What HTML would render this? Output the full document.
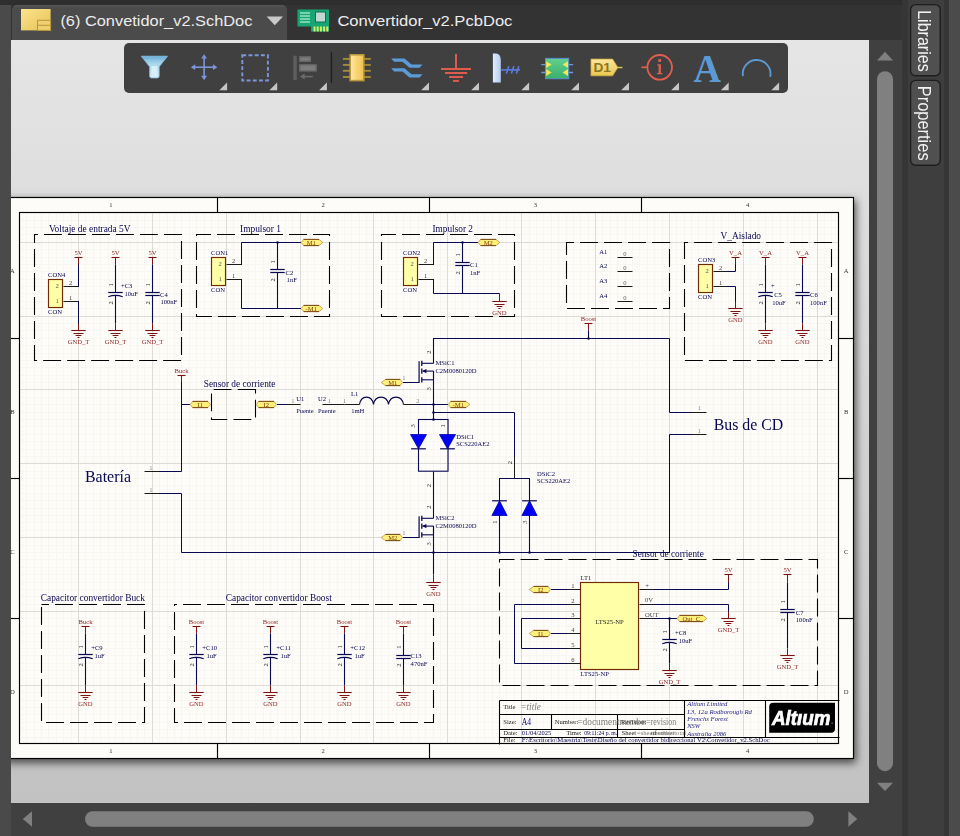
<!DOCTYPE html>
<html><head><meta charset="utf-8"><title>Altium</title>
<style>
html,body{margin:0;padding:0;}
body{width:960px;height:836px;overflow:hidden;background:#333333;position:relative;font-family:"Liberation Sans",sans-serif;}
.abs{position:absolute;}
#canvas{left:11px;top:39.5px;width:858px;height:763.5px;background:linear-gradient(#e5e5e5,#c2c2c2);overflow:hidden;}
#sheet{left:-6px;top:158px;width:849px;height:561px;background:#fefcf8;box-shadow:1px 3px 8px 1px rgba(0,0,0,.62);}
#tb{left:124px;top:43px;width:663.5px;height:49.5px;background:#404040;border-radius:5px;}
</style></head><body>
<!-- left strip -->
<div class="abs" style="left:0;top:0;width:11px;height:836px;background:#4a4a4a"></div>
<div class="abs" style="left:0;top:0;width:960px;height:4.5px;background:#2e2e2e"></div>
<!-- tabs -->
<div class="abs" style="left:11.5px;top:4.5px;width:275px;height:35px;background:linear-gradient(#585858,#4b4b4b 8%,#4b4b4b);border-radius:5px 5px 0 0;"></div>
<svg class="abs" style="left:0;top:0" width="560" height="40" viewBox="0 0 560 40">
 <defs><linearGradient id="yg" x1="0" y1="0" x2="1" y2="1"><stop offset="0" stop-color="#fbe38e"/><stop offset="1" stop-color="#e6c256"/></linearGradient></defs>
 <rect x="21" y="9" width="29.6" height="21.4" fill="url(#yg)"/>
 <rect x="37.5" y="20.3" width="13.1" height="10.1" fill="#efd070" stroke="#b8953a" stroke-width="1"/>
 <line x1="37.5" y1="25.3" x2="50.6" y2="25.3" stroke="#b8953a" stroke-width="1"/>
 <text x="60.4" y="26.4" font-family="Liberation Sans" font-size="15.2" fill="#ececec" textLength="192" lengthAdjust="spacingAndGlyphs">(6) Convetidor_v2.SchDoc</text>
 <polygon points="266.6,16.5 283,16.5 274.8,25.3" fill="#c9c9c9"/>
 <!-- pcb icon -->
 <rect x="297.5" y="9.5" width="31.5" height="17" fill="#17a673"/>
 <rect x="311" y="22" width="18" height="9.5" fill="#17a673"/>
 <g stroke="#b8f0d8" stroke-width="1.2"><line x1="300" y1="13" x2="310" y2="13"/><line x1="300" y1="16" x2="310" y2="16"/><line x1="300" y1="19" x2="310" y2="19"/><line x1="300" y1="22" x2="310" y2="22"/></g>
 <rect x="315.5" y="12" width="10" height="10" fill="#c4d6d4" stroke="#0c6e4c" stroke-width="1"/>
 <g fill="#d8ee60"><rect x="313.5" y="26.5" width="2" height="5"/><rect x="316.7" y="26.5" width="2" height="5"/><rect x="319.9" y="26.5" width="2" height="5"/><rect x="323.1" y="26.5" width="2" height="5"/><rect x="326.3" y="26.5" width="2" height="5"/></g>
 <text x="337.4" y="26.4" font-family="Liberation Sans" font-size="15.2" fill="#ececec" textLength="175" lengthAdjust="spacingAndGlyphs">Convertidor_v2.PcbDoc</text>
</svg>
<!-- canvas -->
<div id="canvas" class="abs"><div id="sheet" class="abs"></div></div>
<svg class="abs" style="left:0;top:0;will-change:transform" width="960" height="836" viewBox="0 0 960 836">
<defs>
 <clipPath id="cv"><rect x="11" y="39.5" width="858" height="763.5"/></clipPath>
 <clipPath id="sh"><rect x="20" y="213" width="819" height="530"/></clipPath>
 <clipPath id="cn"><rect x="570" y="714" width="76" height="15"/></clipPath>
</defs>
<g clip-path="url(#cv)">
 <g clip-path="url(#sh)">
  <path d="M26.5,213 V743 M34.5,213 V743 M41.5,213 V743 M48.5,213 V743 M56.5,213 V743 M63.5,213 V743 M71.5,213 V743 M85.5,213 V743 M93.5,213 V743 M100.5,213 V743 M108.5,213 V743 M115.5,213 V743 M122.5,213 V743 M130.5,213 V743 M137.5,213 V743 M144.5,213 V743 M159.5,213 V743 M167.5,213 V743 M174.5,213 V743 M181.5,213 V743 M189.5,213 V743 M196.5,213 V743 M204.5,213 V743 M211.5,213 V743 M218.5,213 V743 M233.5,213 V743 M241.5,213 V743 M248.5,213 V743 M255.5,213 V743 M263.5,213 V743 M270.5,213 V743 M277.5,213 V743 M285.5,213 V743 M292.5,213 V743 M307.5,213 V743 M314.5,213 V743 M322.5,213 V743 M329.5,213 V743 M337.5,213 V743 M344.5,213 V743 M351.5,213 V743 M359.5,213 V743 M366.5,213 V743 M381.5,213 V743 M388.5,213 V743 M396.5,213 V743 M403.5,213 V743 M410.5,213 V743 M418.5,213 V743 M425.5,213 V743 M433.5,213 V743 M440.5,213 V743 M455.5,213 V743 M462.5,213 V743 M469.5,213 V743 M477.5,213 V743 M484.5,213 V743 M492.5,213 V743 M499.5,213 V743 M506.5,213 V743 M514.5,213 V743 M529.5,213 V743 M536.5,213 V743 M543.5,213 V743 M551.5,213 V743 M558.5,213 V743 M566.5,213 V743 M573.5,213 V743 M580.5,213 V743 M588.5,213 V743 M602.5,213 V743 M610.5,213 V743 M617.5,213 V743 M625.5,213 V743 M632.5,213 V743 M639.5,213 V743 M647.5,213 V743 M654.5,213 V743 M662.5,213 V743 M676.5,213 V743 M684.5,213 V743 M691.5,213 V743 M698.5,213 V743 M706.5,213 V743 M713.5,213 V743 M721.5,213 V743 M728.5,213 V743 M735.5,213 V743 M750.5,213 V743 M758.5,213 V743 M765.5,213 V743 M772.5,213 V743 M780.5,213 V743 M787.5,213 V743 M794.5,213 V743 M802.5,213 V743 M809.5,213 V743 M824.5,213 V743 M831.5,213 V743 M20,737.5 H839 M20,729.5 H839 M20,722.5 H839 M20,714.5 H839 M20,707.5 H839 M20,700.5 H839 M20,692.5 H839 M20,678.5 H839 M20,670.5 H839 M20,663.5 H839 M20,655.5 H839 M20,648.5 H839 M20,641.5 H839 M20,633.5 H839 M20,626.5 H839 M20,618.5 H839 M20,604.5 H839 M20,596.5 H839 M20,589.5 H839 M20,582.5 H839 M20,574.5 H839 M20,567.5 H839 M20,559.5 H839 M20,552.5 H839 M20,545.5 H839 M20,530.5 H839 M20,522.5 H839 M20,515.5 H839 M20,508.5 H839 M20,500.5 H839 M20,493.5 H839 M20,485.5 H839 M20,478.5 H839 M20,471.5 H839 M20,456.5 H839 M20,449.5 H839 M20,441.5 H839 M20,434.5 H839 M20,426.5 H839 M20,419.5 H839 M20,412.5 H839 M20,404.5 H839 M20,397.5 H839 M20,382.5 H839 M20,375.5 H839 M20,367.5 H839 M20,360.5 H839 M20,353.5 H839 M20,345.5 H839 M20,338.5 H839 M20,330.5 H839 M20,323.5 H839 M20,308.5 H839 M20,301.5 H839 M20,293.5 H839 M20,286.5 H839 M20,279.5 H839 M20,271.5 H839 M20,264.5 H839 M20,257.5 H839 M20,249.5 H839 M20,234.5 H839 M20,227.5 H839 M20,220.5 H839 " stroke="#f8f6f1" stroke-width="1" fill="none"/><path d="M78.5,213 V743 M152.5,213 V743 M226.5,213 V743 M300.5,213 V743 M373.5,213 V743 M447.5,213 V743 M521.5,213 V743 M595.5,213 V743 M669.5,213 V743 M743.5,213 V743 M817.5,213 V743 M20,685.5 H839 M20,611.5 H839 M20,537.5 H839 M20,463.5 H839 M20,389.5 H839 M20,316.5 H839 M20,242.5 H839 " stroke="#dddbd5" stroke-width="1" fill="none"/>
 </g>
<rect x="5.5" y="197.5" width="848.0" height="561.0" fill="none" stroke="#000" stroke-width="1.15"/>
<rect x="19.5" y="212.5" width="819.0" height="531.0" fill="none" stroke="#000" stroke-width="1.15"/>
<line x1="217.5" y1="197.5" x2="217.5" y2="212.5" stroke="#000" stroke-width="1.15" />
<line x1="217.5" y1="743.5" x2="217.5" y2="758.5" stroke="#000" stroke-width="1.15" />
<line x1="429.5" y1="197.5" x2="429.5" y2="212.5" stroke="#000" stroke-width="1.15" />
<line x1="429.5" y1="743.5" x2="429.5" y2="758.5" stroke="#000" stroke-width="1.15" />
<line x1="641.5" y1="197.5" x2="641.5" y2="212.5" stroke="#000" stroke-width="1.15" />
<line x1="641.5" y1="743.5" x2="641.5" y2="758.5" stroke="#000" stroke-width="1.15" />
<line x1="5.5" y1="338.5" x2="19.5" y2="338.5" stroke="#000" stroke-width="1.15" />
<line x1="838.5" y1="338.5" x2="853.5" y2="338.5" stroke="#000" stroke-width="1.15" />
<line x1="5.5" y1="478.5" x2="19.5" y2="478.5" stroke="#000" stroke-width="1.15" />
<line x1="838.5" y1="478.5" x2="853.5" y2="478.5" stroke="#000" stroke-width="1.15" />
<line x1="5.5" y1="618.5" x2="19.5" y2="618.5" stroke="#000" stroke-width="1.15" />
<line x1="838.5" y1="618.5" x2="853.5" y2="618.5" stroke="#000" stroke-width="1.15" />
<text x="111" y="206.78" font-family="Liberation Serif" font-size="6.6" fill="#333" text-anchor="middle" >1</text>
<text x="111" y="753.38" font-family="Liberation Serif" font-size="6.6" fill="#333" text-anchor="middle" >1</text>
<text x="323.2" y="206.78" font-family="Liberation Serif" font-size="6.6" fill="#333" text-anchor="middle" >2</text>
<text x="323.2" y="753.38" font-family="Liberation Serif" font-size="6.6" fill="#333" text-anchor="middle" >2</text>
<text x="535.4" y="206.78" font-family="Liberation Serif" font-size="6.6" fill="#333" text-anchor="middle" >3</text>
<text x="535.4" y="753.38" font-family="Liberation Serif" font-size="6.6" fill="#333" text-anchor="middle" >3</text>
<text x="747.6" y="206.78" font-family="Liberation Serif" font-size="6.6" fill="#333" text-anchor="middle" >4</text>
<text x="747.6" y="753.38" font-family="Liberation Serif" font-size="6.6" fill="#333" text-anchor="middle" >4</text>
<text x="12.4" y="273.18" font-family="Liberation Serif" font-size="6.6" fill="#333" text-anchor="middle" >A</text>
<text x="846.2" y="273.18" font-family="Liberation Serif" font-size="6.6" fill="#333" text-anchor="middle" >A</text>
<text x="12.4" y="414.18" font-family="Liberation Serif" font-size="6.6" fill="#333" text-anchor="middle" >B</text>
<text x="846.2" y="414.18" font-family="Liberation Serif" font-size="6.6" fill="#333" text-anchor="middle" >B</text>
<text x="12.4" y="554.48" font-family="Liberation Serif" font-size="6.6" fill="#333" text-anchor="middle" >C</text>
<text x="846.2" y="554.48" font-family="Liberation Serif" font-size="6.6" fill="#333" text-anchor="middle" >C</text>
<text x="12.4" y="694.48" font-family="Liberation Serif" font-size="6.6" fill="#333" text-anchor="middle" >D</text>
<text x="846.2" y="694.48" font-family="Liberation Serif" font-size="6.6" fill="#333" text-anchor="middle" >D</text>
<path d="M34.5,234.5 H181.5 V360.5 H34.5 Z" fill="none" stroke="#000" stroke-width="1.1" stroke-dasharray="18 6" stroke-dashoffset="14.6"/>
<text x="49" y="231.9" font-family="Liberation Serif" font-size="9.4" fill="#070752" text-anchor="start" textLength="81.6" lengthAdjust="spacingAndGlyphs" >Voltaje de entrada 5V</text>
<rect x="48.5" y="279.5" width="14.0" height="28.0" fill="#ffffa8" stroke="#6e2c00" stroke-width="1.15"/>
<text x="48.1" y="277.38" font-family="Liberation Serif" font-size="6.6" fill="#070752" text-anchor="start" >CON4</text>
<text x="48.1" y="314.48" font-family="Liberation Serif" font-size="6.6" fill="#070752" text-anchor="start" >CON</text>
<line x1="63.5" y1="286.5" x2="78.5" y2="286.5" stroke="#1a1a1a" stroke-width="1.0" />
<line x1="63.5" y1="301.5" x2="78.5" y2="301.5" stroke="#1a1a1a" stroke-width="1.0" />
<text x="57.2" y="288.08" font-family="Liberation Serif" font-size="6.6" fill="#555" text-anchor="middle" >2</text>
<text x="57.2" y="303.08" font-family="Liberation Serif" font-size="6.6" fill="#555" text-anchor="middle" >1</text>
<text x="70.7" y="284.68" font-family="Liberation Serif" font-size="6.6" fill="#444" text-anchor="middle" >2</text>
<text x="70.7" y="299.68" font-family="Liberation Serif" font-size="6.6" fill="#444" text-anchor="middle" >1</text>
<polyline points="78.5,286.5 78.5,264.5" fill="none" stroke="#070752" stroke-width="1.0" stroke-linejoin="miter" stroke-linecap="square"/>
<line x1="78.5" y1="264.5" x2="78.5" y2="257.5" stroke="#7c1414" stroke-width="1.0" />
<line x1="74.5" y1="257.5" x2="82.5" y2="257.5" stroke="#7c1414" stroke-width="1.1" />
<text x="78.5" y="255.3" font-family="Liberation Serif" font-size="6.6" fill="#8a2828" text-anchor="middle" >5V</text>
<polyline points="78.5,301.5 78.5,323.5" fill="none" stroke="#070752" stroke-width="1.0" stroke-linejoin="miter" stroke-linecap="square"/>
<line x1="78.5" y1="323.5" x2="78.5" y2="330.5" stroke="#7c1414" stroke-width="1.0" />
<line x1="71.3" y1="330.5" x2="85.7" y2="330.5" stroke="#7c1414" stroke-width="1.1" />
<line x1="73.5" y1="333.5" x2="83.5" y2="333.5" stroke="#7c1414" stroke-width="1.0" />
<line x1="75.6" y1="335.5" x2="81.4" y2="335.5" stroke="#7c1414" stroke-width="1.0" />
<line x1="77.5" y1="337.5" x2="79.5" y2="337.5" stroke="#7c1414" stroke-width="1.0" />
<text x="78.5" y="343.68" font-family="Liberation Serif" font-size="6.6" fill="#8a2828" text-anchor="middle" >GND_T</text>
<line x1="115.5" y1="264.5" x2="115.5" y2="257.5" stroke="#7c1414" stroke-width="1.0" />
<line x1="111.5" y1="257.5" x2="119.5" y2="257.5" stroke="#7c1414" stroke-width="1.1" />
<text x="115.5" y="255.3" font-family="Liberation Serif" font-size="6.6" fill="#8a2828" text-anchor="middle" >5V</text>
<line x1="115.5" y1="264.5" x2="115.5" y2="292.5" stroke="#070752" stroke-width="1.1" />
<line x1="115.5" y1="295.5" x2="115.5" y2="323.5" stroke="#070752" stroke-width="1.1" />
<line x1="108.3" y1="292.5" x2="122.7" y2="292.5" stroke="#070752" stroke-width="1.2" />
<path d="M108.3,296.7 Q115.5,294.1 122.7,296.7" fill="none" stroke="#070752" stroke-width="1.2"/>
<text transform="translate(111.1,284.9) rotate(-90)" font-family="Liberation Serif" font-size="6.5" fill="#2a2a2a" text-anchor="middle" dy="2.15">1</text>
<text transform="translate(111.1,302.9) rotate(-90)" font-family="Liberation Serif" font-size="6.5" fill="#2a2a2a" text-anchor="middle" dy="2.15">2</text>
<line x1="115.5" y1="323.5" x2="115.5" y2="330.5" stroke="#7c1414" stroke-width="1.0" />
<line x1="108.3" y1="330.5" x2="122.7" y2="330.5" stroke="#7c1414" stroke-width="1.1" />
<line x1="110.5" y1="333.5" x2="120.5" y2="333.5" stroke="#7c1414" stroke-width="1.0" />
<line x1="112.6" y1="335.5" x2="118.4" y2="335.5" stroke="#7c1414" stroke-width="1.0" />
<line x1="114.5" y1="337.5" x2="116.5" y2="337.5" stroke="#7c1414" stroke-width="1.0" />
<text x="115.5" y="343.68" font-family="Liberation Serif" font-size="6.6" fill="#8a2828" text-anchor="middle" >GND_T</text>
<line x1="152.5" y1="264.5" x2="152.5" y2="257.5" stroke="#7c1414" stroke-width="1.0" />
<line x1="148.5" y1="257.5" x2="156.5" y2="257.5" stroke="#7c1414" stroke-width="1.1" />
<text x="152.5" y="255.3" font-family="Liberation Serif" font-size="6.6" fill="#8a2828" text-anchor="middle" >5V</text>
<line x1="152.5" y1="264.5" x2="152.5" y2="292.5" stroke="#070752" stroke-width="1.1" />
<line x1="152.5" y1="295.5" x2="152.5" y2="323.5" stroke="#070752" stroke-width="1.1" />
<line x1="145.3" y1="292.5" x2="159.7" y2="292.5" stroke="#070752" stroke-width="1.2" />
<line x1="145.3" y1="295.5" x2="159.7" y2="295.5" stroke="#070752" stroke-width="1.2" />
<text transform="translate(148.1,284.9) rotate(-90)" font-family="Liberation Serif" font-size="6.5" fill="#2a2a2a" text-anchor="middle" dy="2.15">1</text>
<text transform="translate(148.1,302.9) rotate(-90)" font-family="Liberation Serif" font-size="6.5" fill="#2a2a2a" text-anchor="middle" dy="2.15">2</text>
<line x1="152.5" y1="323.5" x2="152.5" y2="330.5" stroke="#7c1414" stroke-width="1.0" />
<line x1="145.3" y1="330.5" x2="159.7" y2="330.5" stroke="#7c1414" stroke-width="1.1" />
<line x1="147.5" y1="333.5" x2="157.5" y2="333.5" stroke="#7c1414" stroke-width="1.0" />
<line x1="149.6" y1="335.5" x2="155.4" y2="335.5" stroke="#7c1414" stroke-width="1.0" />
<line x1="151.5" y1="337.5" x2="153.5" y2="337.5" stroke="#7c1414" stroke-width="1.0" />
<text x="152.5" y="343.68" font-family="Liberation Serif" font-size="6.6" fill="#8a2828" text-anchor="middle" >GND_T</text>
<text x="121" y="288.38" font-family="Liberation Serif" font-size="6.6" fill="#070752" text-anchor="start" >+C3</text>
<text x="124.4" y="295.78" font-family="Liberation Serif" font-size="6.6" fill="#070752" text-anchor="start" >10uF</text>
<text x="160" y="296.78" font-family="Liberation Serif" font-size="6.6" fill="#070752" text-anchor="start" >C4</text>
<text x="160.4" y="304.28" font-family="Liberation Serif" font-size="6.6" fill="#070752" text-anchor="start" >100nF</text>
<path d="M196.5,234.5 H329.5 V316.5 H196.5 Z" fill="none" stroke="#000" stroke-width="1.1" stroke-dasharray="18 6" stroke-dashoffset="3.5"/>
<text x="240" y="231.9" font-family="Liberation Serif" font-size="9.4" fill="#070752" text-anchor="start" textLength="41" lengthAdjust="spacingAndGlyphs" >Impulsor 1</text>
<rect x="211.5" y="257.5" width="14.0" height="28.0" fill="#ffffa8" stroke="#6e2c00" stroke-width="1.15"/>
<text x="211.1" y="255.38" font-family="Liberation Serif" font-size="6.6" fill="#070752" text-anchor="start" >CON1</text>
<text x="211.1" y="292.48" font-family="Liberation Serif" font-size="6.6" fill="#070752" text-anchor="start" >CON</text>
<line x1="226.5" y1="264.5" x2="241.5" y2="264.5" stroke="#1a1a1a" stroke-width="1.0" />
<line x1="226.5" y1="279.5" x2="241.5" y2="279.5" stroke="#1a1a1a" stroke-width="1.0" />
<text x="220.2" y="266.08" font-family="Liberation Serif" font-size="6.6" fill="#555" text-anchor="middle" >2</text>
<text x="220.2" y="281.08" font-family="Liberation Serif" font-size="6.6" fill="#555" text-anchor="middle" >1</text>
<text x="233.7" y="262.68" font-family="Liberation Serif" font-size="6.6" fill="#444" text-anchor="middle" >2</text>
<text x="233.7" y="277.68" font-family="Liberation Serif" font-size="6.6" fill="#444" text-anchor="middle" >1</text>
<polyline points="241.5,264.5 241.5,242.5 300.5,242.5" fill="none" stroke="#070752" stroke-width="1.0" stroke-linejoin="miter" stroke-linecap="square"/>
<polyline points="241.5,279.5 241.5,308.5 300.5,308.5" fill="none" stroke="#070752" stroke-width="1.0" stroke-linejoin="miter" stroke-linecap="square"/>
<line x1="277.5" y1="242.5" x2="277.5" y2="269.5" stroke="#070752" stroke-width="1.1" />
<line x1="277.5" y1="272.5" x2="277.5" y2="308.5" stroke="#070752" stroke-width="1.1" />
<line x1="270.3" y1="269.5" x2="284.7" y2="269.5" stroke="#070752" stroke-width="1.2" />
<line x1="270.3" y1="272.5" x2="284.7" y2="272.5" stroke="#070752" stroke-width="1.2" />
<text transform="translate(273.1,261.8) rotate(-90)" font-family="Liberation Serif" font-size="6.5" fill="#2a2a2a" text-anchor="middle" dy="2.15">1</text>
<text transform="translate(273.1,279.8) rotate(-90)" font-family="Liberation Serif" font-size="6.5" fill="#2a2a2a" text-anchor="middle" dy="2.15">2</text>
<circle cx="277.5" cy="242.5" r="1.25" fill="#070752"/>
<text x="285.6" y="274.58" font-family="Liberation Serif" font-size="6.6" fill="#070752" text-anchor="start" >C2</text>
<text x="286.6" y="281.58" font-family="Liberation Serif" font-size="6.6" fill="#070752" text-anchor="start" >1nF</text>
<polygon points="301.2,242.5 303.6,239.4 319.0,239.4 322.8,242.5 319.0,245.6 303.6,245.6" fill="#fff07a" stroke="#b08a3a" stroke-width="0.7" stroke-linejoin="round"/>
<path d="M303.6,239.4 H319.0 M303.6,245.6 H319.0" stroke="#7a4a14" stroke-width="1.0" fill="none"/>
<text x="311.3" y="244.78" font-family="Liberation Serif" font-size="6.6" fill="#7a3a10" text-anchor="middle" >M1</text>
<polygon points="301.2,308.5 303.6,305.4 319.0,305.4 322.8,308.5 319.0,311.6 303.6,311.6" fill="#fff07a" stroke="#b08a3a" stroke-width="0.7" stroke-linejoin="round"/>
<path d="M303.6,305.4 H319.0 M303.6,311.6 H319.0" stroke="#7a4a14" stroke-width="1.0" fill="none"/>
<text x="311.3" y="310.78" font-family="Liberation Serif" font-size="6.6" fill="#7a3a10" text-anchor="middle" >-M1</text>
<path d="M381.5,234.5 H514.5 V316.5 H381.5 Z" fill="none" stroke="#000" stroke-width="1.1" stroke-dasharray="18 6" stroke-dashoffset="3.5"/>
<text x="432.5" y="231.9" font-family="Liberation Serif" font-size="9.4" fill="#070752" text-anchor="start" textLength="40.5" lengthAdjust="spacingAndGlyphs" >Impulsor 2</text>
<rect x="403.5" y="257.5" width="14.0" height="28.0" fill="#ffffa8" stroke="#6e2c00" stroke-width="1.15"/>
<text x="403.1" y="255.38" font-family="Liberation Serif" font-size="6.6" fill="#070752" text-anchor="start" >CON2</text>
<text x="403.1" y="292.48" font-family="Liberation Serif" font-size="6.6" fill="#070752" text-anchor="start" >CON</text>
<line x1="418.5" y1="264.5" x2="433.5" y2="264.5" stroke="#1a1a1a" stroke-width="1.0" />
<line x1="418.5" y1="279.5" x2="433.5" y2="279.5" stroke="#1a1a1a" stroke-width="1.0" />
<text x="412.2" y="266.08" font-family="Liberation Serif" font-size="6.6" fill="#555" text-anchor="middle" >2</text>
<text x="412.2" y="281.08" font-family="Liberation Serif" font-size="6.6" fill="#555" text-anchor="middle" >1</text>
<text x="425.7" y="262.68" font-family="Liberation Serif" font-size="6.6" fill="#444" text-anchor="middle" >2</text>
<text x="425.7" y="277.68" font-family="Liberation Serif" font-size="6.6" fill="#444" text-anchor="middle" >1</text>
<polyline points="433.5,264.5 433.5,242.5 477.5,242.5" fill="none" stroke="#070752" stroke-width="1.0" stroke-linejoin="miter" stroke-linecap="square"/>
<polyline points="433.5,279.5 433.5,293.5 499.5,293.5 499.5,293.5" fill="none" stroke="#070752" stroke-width="1.0" stroke-linejoin="miter" stroke-linecap="square"/>
<line x1="462.5" y1="242.5" x2="462.5" y2="262.5" stroke="#070752" stroke-width="1.1" />
<line x1="462.5" y1="265.5" x2="462.5" y2="293.5" stroke="#070752" stroke-width="1.1" />
<line x1="455.3" y1="262.5" x2="469.7" y2="262.5" stroke="#070752" stroke-width="1.2" />
<line x1="455.3" y1="265.5" x2="469.7" y2="265.5" stroke="#070752" stroke-width="1.2" />
<text transform="translate(458.1,254.8) rotate(-90)" font-family="Liberation Serif" font-size="6.5" fill="#2a2a2a" text-anchor="middle" dy="2.15">1</text>
<text transform="translate(458.1,272.8) rotate(-90)" font-family="Liberation Serif" font-size="6.5" fill="#2a2a2a" text-anchor="middle" dy="2.15">2</text>
<circle cx="462.5" cy="242.5" r="1.25" fill="#070752"/>
<text x="470" y="267.18" font-family="Liberation Serif" font-size="6.6" fill="#070752" text-anchor="start" >C1</text>
<text x="470" y="274.68" font-family="Liberation Serif" font-size="6.6" fill="#070752" text-anchor="start" >1nF</text>
<polygon points="478.2,242.5 480.6,239.4 496.0,239.4 499.8,242.5 496.0,245.6 480.6,245.6" fill="#fff07a" stroke="#b08a3a" stroke-width="0.7" stroke-linejoin="round"/>
<path d="M480.6,239.4 H496.0 M480.6,245.6 H496.0" stroke="#7a4a14" stroke-width="1.0" fill="none"/>
<text x="488.3" y="244.78" font-family="Liberation Serif" font-size="6.6" fill="#7a3a10" text-anchor="middle" >M2</text>
<line x1="499.5" y1="293.5" x2="499.5" y2="301.5" stroke="#7c1414" stroke-width="1.0" />
<line x1="492.3" y1="301.5" x2="506.7" y2="301.5" stroke="#7c1414" stroke-width="1.1" />
<line x1="494.5" y1="304.5" x2="504.5" y2="304.5" stroke="#7c1414" stroke-width="1.0" />
<line x1="496.6" y1="306.5" x2="502.4" y2="306.5" stroke="#7c1414" stroke-width="1.0" />
<line x1="498.5" y1="308.5" x2="500.5" y2="308.5" stroke="#7c1414" stroke-width="1.0" />
<text x="499.5" y="314.68" font-family="Liberation Serif" font-size="6.6" fill="#8a2828" text-anchor="middle" >GND</text>
<path d="M566.5,242.5 H669.5 V308.5 H566.5 Z" fill="none" stroke="#000" stroke-width="1.1" stroke-dasharray="18 6" stroke-dashoffset="10.5"/>
<line x1="617.5" y1="257.5" x2="632.5" y2="257.5" stroke="#1a1a1a" stroke-width="1.0" />
<text x="599.2" y="254.08" font-family="Liberation Serif" font-size="6.6" fill="#070752" text-anchor="start" >A1</text>
<text x="625" y="255.68" font-family="Liberation Serif" font-size="6.6" fill="#666" text-anchor="middle" >0</text>
<line x1="617.5" y1="271.5" x2="632.5" y2="271.5" stroke="#1a1a1a" stroke-width="1.0" />
<text x="599.2" y="268.08" font-family="Liberation Serif" font-size="6.6" fill="#070752" text-anchor="start" >A2</text>
<text x="625" y="269.68" font-family="Liberation Serif" font-size="6.6" fill="#666" text-anchor="middle" >0</text>
<line x1="617.5" y1="286.5" x2="632.5" y2="286.5" stroke="#1a1a1a" stroke-width="1.0" />
<text x="599.2" y="283.08" font-family="Liberation Serif" font-size="6.6" fill="#070752" text-anchor="start" >A3</text>
<text x="625" y="284.68" font-family="Liberation Serif" font-size="6.6" fill="#666" text-anchor="middle" >0</text>
<line x1="617.5" y1="301.5" x2="632.5" y2="301.5" stroke="#1a1a1a" stroke-width="1.0" />
<text x="599.2" y="298.08" font-family="Liberation Serif" font-size="6.6" fill="#070752" text-anchor="start" >A4</text>
<text x="625" y="299.68" font-family="Liberation Serif" font-size="6.6" fill="#666" text-anchor="middle" >0</text>
<path d="M684.5,242.5 H831.5 V360.5 H684.5 Z" fill="none" stroke="#000" stroke-width="1.1" stroke-dasharray="18 6" stroke-dashoffset="14.4"/>
<text x="720.5" y="239.2" font-family="Liberation Serif" font-size="9.4" fill="#070752" text-anchor="start" textLength="40.5" lengthAdjust="spacingAndGlyphs" >V_Aislado</text>
<rect x="698.5" y="264.5" width="14.0" height="28.0" fill="#ffffa8" stroke="#6e2c00" stroke-width="1.15"/>
<text x="698.1" y="262.38" font-family="Liberation Serif" font-size="6.6" fill="#070752" text-anchor="start" >CON3</text>
<text x="698.1" y="299.48" font-family="Liberation Serif" font-size="6.6" fill="#070752" text-anchor="start" >CON</text>
<line x1="713.5" y1="271.5" x2="728.5" y2="271.5" stroke="#1a1a1a" stroke-width="1.0" />
<line x1="713.5" y1="286.5" x2="728.5" y2="286.5" stroke="#1a1a1a" stroke-width="1.0" />
<text x="707.2" y="273.08" font-family="Liberation Serif" font-size="6.6" fill="#555" text-anchor="middle" >2</text>
<text x="707.2" y="288.08" font-family="Liberation Serif" font-size="6.6" fill="#555" text-anchor="middle" >1</text>
<text x="720.7" y="269.68" font-family="Liberation Serif" font-size="6.6" fill="#444" text-anchor="middle" >2</text>
<text x="720.7" y="284.68" font-family="Liberation Serif" font-size="6.6" fill="#444" text-anchor="middle" >1</text>
<polyline points="728.5,271.5 735.5,271.5 735.5,264.5" fill="none" stroke="#070752" stroke-width="1.0" stroke-linejoin="miter" stroke-linecap="square"/>
<line x1="735.5" y1="264.5" x2="735.5" y2="257.5" stroke="#7c1414" stroke-width="1.0" />
<line x1="731.5" y1="257.5" x2="739.5" y2="257.5" stroke="#7c1414" stroke-width="1.1" />
<text x="735.5" y="255.3" font-family="Liberation Serif" font-size="6.6" fill="#8a2828" text-anchor="middle" >V_A</text>
<polyline points="728.5,286.5 735.5,286.5 735.5,301.5" fill="none" stroke="#070752" stroke-width="1.0" stroke-linejoin="miter" stroke-linecap="square"/>
<line x1="735.5" y1="301.5" x2="735.5" y2="308.5" stroke="#7c1414" stroke-width="1.0" />
<line x1="728.3" y1="308.5" x2="742.7" y2="308.5" stroke="#7c1414" stroke-width="1.1" />
<line x1="730.5" y1="311.5" x2="740.5" y2="311.5" stroke="#7c1414" stroke-width="1.0" />
<line x1="732.6" y1="313.5" x2="738.4" y2="313.5" stroke="#7c1414" stroke-width="1.0" />
<line x1="734.5" y1="315.5" x2="736.5" y2="315.5" stroke="#7c1414" stroke-width="1.0" />
<text x="735.5" y="321.68" font-family="Liberation Serif" font-size="6.6" fill="#8a2828" text-anchor="middle" >GND</text>
<line x1="765.5" y1="264.5" x2="765.5" y2="257.5" stroke="#7c1414" stroke-width="1.0" />
<line x1="761.5" y1="257.5" x2="769.5" y2="257.5" stroke="#7c1414" stroke-width="1.1" />
<text x="765.5" y="255.3" font-family="Liberation Serif" font-size="6.6" fill="#8a2828" text-anchor="middle" >V_A</text>
<line x1="765.5" y1="264.5" x2="765.5" y2="292.5" stroke="#070752" stroke-width="1.1" />
<line x1="765.5" y1="295.5" x2="765.5" y2="323.5" stroke="#070752" stroke-width="1.1" />
<line x1="758.3" y1="292.5" x2="772.7" y2="292.5" stroke="#070752" stroke-width="1.2" />
<path d="M758.3,296.7 Q765.5,294.1 772.7,296.7" fill="none" stroke="#070752" stroke-width="1.2"/>
<text transform="translate(761.1,284.8) rotate(-90)" font-family="Liberation Serif" font-size="6.5" fill="#2a2a2a" text-anchor="middle" dy="2.15">1</text>
<text transform="translate(761.1,302.8) rotate(-90)" font-family="Liberation Serif" font-size="6.5" fill="#2a2a2a" text-anchor="middle" dy="2.15">2</text>
<line x1="765.5" y1="323.5" x2="765.5" y2="330.5" stroke="#7c1414" stroke-width="1.0" />
<line x1="758.3" y1="330.5" x2="772.7" y2="330.5" stroke="#7c1414" stroke-width="1.1" />
<line x1="760.5" y1="333.5" x2="770.5" y2="333.5" stroke="#7c1414" stroke-width="1.0" />
<line x1="762.6" y1="335.5" x2="768.4" y2="335.5" stroke="#7c1414" stroke-width="1.0" />
<line x1="764.5" y1="337.5" x2="766.5" y2="337.5" stroke="#7c1414" stroke-width="1.0" />
<text x="765.5" y="343.68" font-family="Liberation Serif" font-size="6.6" fill="#8a2828" text-anchor="middle" >GND</text>
<line x1="802.5" y1="264.5" x2="802.5" y2="257.5" stroke="#7c1414" stroke-width="1.0" />
<line x1="798.5" y1="257.5" x2="806.5" y2="257.5" stroke="#7c1414" stroke-width="1.1" />
<text x="802.5" y="255.3" font-family="Liberation Serif" font-size="6.6" fill="#8a2828" text-anchor="middle" >V_A</text>
<line x1="802.5" y1="264.5" x2="802.5" y2="292.5" stroke="#070752" stroke-width="1.1" />
<line x1="802.5" y1="295.5" x2="802.5" y2="323.5" stroke="#070752" stroke-width="1.1" />
<line x1="795.3" y1="292.5" x2="809.7" y2="292.5" stroke="#070752" stroke-width="1.2" />
<line x1="795.3" y1="295.5" x2="809.7" y2="295.5" stroke="#070752" stroke-width="1.2" />
<text transform="translate(798.1,284.8) rotate(-90)" font-family="Liberation Serif" font-size="6.5" fill="#2a2a2a" text-anchor="middle" dy="2.15">1</text>
<text transform="translate(798.1,302.8) rotate(-90)" font-family="Liberation Serif" font-size="6.5" fill="#2a2a2a" text-anchor="middle" dy="2.15">2</text>
<line x1="802.5" y1="323.5" x2="802.5" y2="330.5" stroke="#7c1414" stroke-width="1.0" />
<line x1="795.3" y1="330.5" x2="809.7" y2="330.5" stroke="#7c1414" stroke-width="1.1" />
<line x1="797.5" y1="333.5" x2="807.5" y2="333.5" stroke="#7c1414" stroke-width="1.0" />
<line x1="799.6" y1="335.5" x2="805.4" y2="335.5" stroke="#7c1414" stroke-width="1.0" />
<line x1="801.5" y1="337.5" x2="803.5" y2="337.5" stroke="#7c1414" stroke-width="1.0" />
<text x="802.5" y="343.68" font-family="Liberation Serif" font-size="6.6" fill="#8a2828" text-anchor="middle" >GND</text>
<text x="771" y="288.38" font-family="Liberation Serif" font-size="6.6" fill="#070752" text-anchor="start" >+</text>
<text x="774.2" y="296.78" font-family="Liberation Serif" font-size="6.6" fill="#070752" text-anchor="start" >C5</text>
<text x="772.2" y="304.58" font-family="Liberation Serif" font-size="6.6" fill="#070752" text-anchor="start" >10uF</text>
<text x="810" y="296.78" font-family="Liberation Serif" font-size="6.6" fill="#070752" text-anchor="start" >C6</text>
<text x="810" y="304.58" font-family="Liberation Serif" font-size="6.6" fill="#070752" text-anchor="start" >100nF</text>
<line x1="181.5" y1="382.5" x2="181.5" y2="375.5" stroke="#7c1414" stroke-width="1.0" />
<line x1="177.5" y1="375.5" x2="185.5" y2="375.5" stroke="#7c1414" stroke-width="1.1" />
<text x="181.5" y="373.3" font-family="Liberation Serif" font-size="6.6" fill="#8a2828" text-anchor="middle" >Buck</text>
<polyline points="181.5,382.5 181.5,471.5 159.5,471.5" fill="none" stroke="#070752" stroke-width="1.0" stroke-linejoin="miter" stroke-linecap="square"/>
<line x1="144.5" y1="471.5" x2="159.5" y2="471.5" stroke="#1a1a1a" stroke-width="1.0" />
<text x="151" y="469.78" font-family="Liberation Serif" font-size="6.6" fill="#888" text-anchor="middle" >1</text>
<line x1="144.5" y1="493.5" x2="159.5" y2="493.5" stroke="#1a1a1a" stroke-width="1.0" />
<text x="151" y="491.78" font-family="Liberation Serif" font-size="6.6" fill="#888" text-anchor="middle" >1</text>
<polyline points="159.5,493.5 181.5,493.5 181.5,552.5 669.5,552.5" fill="none" stroke="#070752" stroke-width="1.0" stroke-linejoin="miter" stroke-linecap="square"/>
<text x="85" y="482" font-family="Liberation Serif" font-size="15.9" fill="#070752" text-anchor="start" textLength="46" lengthAdjust="spacingAndGlyphs" >Batería</text>
<polyline points="181.5,404.5 189.5,404.5" fill="none" stroke="#070752" stroke-width="1.0" stroke-linejoin="miter" stroke-linecap="square"/>
<polygon points="190.2,404.5 192.6,401.4 208.0,401.4 210.4,404.5 208.0,407.6 192.6,407.6" fill="#fff07a" stroke="#b08a3a" stroke-width="0.7" stroke-linejoin="round"/>
<path d="M192.6,401.4 H208.0 M192.6,407.6 H208.0" stroke="#7a4a14" stroke-width="1.0" fill="none"/>
<text x="200.3" y="406.78" font-family="Liberation Serif" font-size="6.6" fill="#7a3a10" text-anchor="middle" >I1</text>
<path d="M255.5,389.5 H211.5 V419.5 H255.5 Z" fill="none" stroke="#000" stroke-width="1.1" stroke-dasharray="17.8 6.2" stroke-dashoffset="0"/>
<text x="203.75" y="386.9" font-family="Liberation Serif" font-size="9.4" fill="#070752" text-anchor="start" textLength="71.75" lengthAdjust="spacingAndGlyphs" >Sensor de corriente</text>
<polygon points="256.2,404.5 258.6,401.4 274.0,401.4 276.4,404.5 274.0,407.6 258.6,407.6" fill="#fff07a" stroke="#b08a3a" stroke-width="0.7" stroke-linejoin="round"/>
<path d="M258.6,401.4 H274.0 M258.6,407.6 H274.0" stroke="#7a4a14" stroke-width="1.0" fill="none"/>
<text x="266.3" y="406.78" font-family="Liberation Serif" font-size="6.6" fill="#7a3a10" text-anchor="middle" >I2</text>
<polyline points="277.5,404.5 285.5,404.5" fill="none" stroke="#070752" stroke-width="1.0" stroke-linejoin="miter" stroke-linecap="square"/>
<line x1="285.5" y1="404.5" x2="300.5" y2="404.5" stroke="#1a1a1a" stroke-width="1.0" />
<text x="293" y="402.58" font-family="Liberation Serif" font-size="6.6" fill="#888" text-anchor="middle" >1</text>
<text x="296.2" y="400.68" font-family="Liberation Serif" font-size="6.6" fill="#070752" text-anchor="start" >U1</text>
<text x="296.2" y="412.58" font-family="Liberation Serif" font-size="6.6" fill="#070752" text-anchor="start" textLength="17.5" lengthAdjust="spacingAndGlyphs" >Puente</text>
<line x1="322.5" y1="404.5" x2="344.5" y2="404.5" stroke="#1a1a1a" stroke-width="1.0" />
<text x="329.4" y="402.58" font-family="Liberation Serif" font-size="6.6" fill="#888" text-anchor="middle" >1</text>
<text x="344.4" y="402.58" font-family="Liberation Serif" font-size="6.6" fill="#888" text-anchor="middle" >1</text>
<text x="318" y="400.68" font-family="Liberation Serif" font-size="6.6" fill="#070752" text-anchor="start" >U2</text>
<text x="318" y="412.58" font-family="Liberation Serif" font-size="6.6" fill="#070752" text-anchor="start" textLength="17.5" lengthAdjust="spacingAndGlyphs" >Puente</text>
<line x1="344.5" y1="404.5" x2="359.5" y2="404.5" stroke="#1a1a1a" stroke-width="1.0" />
<text x="350.9" y="395.58" font-family="Liberation Serif" font-size="6.6" fill="#070752" text-anchor="start" >L1</text>
<text x="351.2" y="412.58" font-family="Liberation Serif" font-size="6.6" fill="#070752" text-anchor="start" >1mH</text>
<path d="M359.5,404.5 C361.1,394.7 371.9,394.7 373.5,404.5 C375.1,394.7 386.9,394.7 388.5,404.5 C390.1,394.7 401.9,394.7 403.5,404.5" fill="none" stroke="#070752" stroke-width="1.15"/>
<line x1="403.5" y1="404.5" x2="418.5" y2="404.5" stroke="#1a1a1a" stroke-width="1.0" />
<text x="418" y="402.58" font-family="Liberation Serif" font-size="6.6" fill="#888" text-anchor="middle" >2</text>
<polyline points="418.5,404.5 447.5,404.5" fill="none" stroke="#070752" stroke-width="1.0" stroke-linejoin="miter" stroke-linecap="square"/>
<circle cx="433.5" cy="404.5" r="1.25" fill="#070752"/>
<circle cx="433.5" cy="412.5" r="1.25" fill="#070752"/>
<polygon points="448.2,404.5 450.6,401.4 466.0,401.4 469.8,404.5 466.0,407.6 450.6,407.6" fill="#fff07a" stroke="#b08a3a" stroke-width="0.7" stroke-linejoin="round"/>
<path d="M450.6,401.4 H466.0 M450.6,407.6 H466.0" stroke="#7a4a14" stroke-width="1.0" fill="none"/>
<text x="458.3" y="406.78" font-family="Liberation Serif" font-size="6.6" fill="#7a3a10" text-anchor="middle" >-M1</text>
<polyline points="433.5,338.5 669.5,338.5 669.5,412.5 691.5,412.5" fill="none" stroke="#070752" stroke-width="1.0" stroke-linejoin="miter" stroke-linecap="square"/>
<line x1="691.5" y1="412.5" x2="706.5" y2="412.5" stroke="#1a1a1a" stroke-width="1.0" />
<text x="699.5" y="410.18" font-family="Liberation Serif" font-size="6.6" fill="#888" text-anchor="middle" >1</text>
<line x1="691.5" y1="434.5" x2="706.5" y2="434.5" stroke="#1a1a1a" stroke-width="1.0" />
<text x="699.5" y="432.58" font-family="Liberation Serif" font-size="6.6" fill="#888" text-anchor="middle" >1</text>
<polyline points="691.5,434.5 669.5,434.5 669.5,552.5" fill="none" stroke="#070752" stroke-width="1.0" stroke-linejoin="miter" stroke-linecap="square"/>
<text x="713.75" y="429.5" font-family="Liberation Serif" font-size="15.9" fill="#070752" text-anchor="start" textLength="69.5" lengthAdjust="spacingAndGlyphs" >Bus de CD</text>
<line x1="588.5" y1="330.5" x2="588.5" y2="323.5" stroke="#7c1414" stroke-width="1.0" />
<line x1="584.5" y1="323.5" x2="592.5" y2="323.5" stroke="#7c1414" stroke-width="1.1" />
<text x="588.5" y="321.3" font-family="Liberation Serif" font-size="6.6" fill="#8a2828" text-anchor="middle" >Boost</text>
<line x1="588.5" y1="330.5" x2="588.5" y2="338.5" stroke="#070752" stroke-width="1.1" />
<circle cx="588.5" cy="338.5" r="1.25" fill="#070752"/>
<line x1="419.1" y1="361.3" x2="419.1" y2="383.0" stroke="#070752" stroke-width="1.2" />
<line x1="421.8" y1="360.7" x2="421.8" y2="365.90000000000003" stroke="#070752" stroke-width="1.3" />
<line x1="421.8" y1="368.5" x2="421.8" y2="373.70000000000005" stroke="#070752" stroke-width="1.3" />
<line x1="421.8" y1="377.2" x2="421.8" y2="382.40000000000003" stroke="#070752" stroke-width="1.3" />
<line x1="421.8" y1="363.3" x2="433.5" y2="363.3" stroke="#070752" stroke-width="1.1" />
<line x1="422.8" y1="371.1" x2="433.5" y2="371.1" stroke="#070752" stroke-width="1.1" />
<line x1="421.8" y1="379.8" x2="433.5" y2="379.8" stroke="#070752" stroke-width="1.1" />
<polygon points="422.2,371.1 426.40000000000003,369.0 426.40000000000003,373.20000000000005" fill="#070752"/>
<line x1="433.5" y1="371.1" x2="433.5" y2="379.8" stroke="#070752" stroke-width="1.1" />
<text x="435.4" y="365.28" font-family="Liberation Serif" font-size="6.6" fill="#070752" text-anchor="start" >MSiC1</text>
<text x="435.4" y="372.68" font-family="Liberation Serif" font-size="6.6" fill="#070752" text-anchor="start" textLength="41.2" lengthAdjust="spacingAndGlyphs" >C2M0080120D</text>
<text transform="translate(428.9,352.1) rotate(-90)" font-family="Liberation Serif" font-size="6.5" fill="#2a2a2a" text-anchor="middle" dy="2.15">2</text>
<text transform="translate(428.9,388.9) rotate(-90)" font-family="Liberation Serif" font-size="6.5" fill="#2a2a2a" text-anchor="middle" dy="2.15">3</text>
<line x1="433.5" y1="338.5" x2="433.5" y2="363.3" stroke="#070752" stroke-width="1.1" />
<line x1="433.5" y1="371.1" x2="433.5" y2="419.5" stroke="#070752" stroke-width="1.1" />
<polygon points="381.3,382.5 385.5,379.4 400.2,379.4 402.4,382.5 400.2,385.6 385.5,385.6" fill="#fff07a" stroke="#b08a3a" stroke-width="0.7" stroke-linejoin="round"/>
<path d="M385.5,379.4 H400.2 M385.5,385.6 H400.2" stroke="#7a4a14" stroke-width="1.0" fill="none"/>
<text x="392.85" y="384.78" font-family="Liberation Serif" font-size="6.6" fill="#7a3a10" text-anchor="middle" >M1</text>
<polyline points="403.5,382.5 418.5,382.5" fill="none" stroke="#070752" stroke-width="1.0" stroke-linejoin="miter" stroke-linecap="square"/>
<text x="404" y="380.18" font-family="Liberation Serif" font-size="6.6" fill="#888" text-anchor="middle" >1</text>
<line x1="419.1" y1="516.3" x2="419.1" y2="538.0" stroke="#070752" stroke-width="1.2" />
<line x1="421.8" y1="515.6999999999999" x2="421.8" y2="520.9" stroke="#070752" stroke-width="1.3" />
<line x1="421.8" y1="523.5" x2="421.8" y2="528.7" stroke="#070752" stroke-width="1.3" />
<line x1="421.8" y1="532.1999999999999" x2="421.8" y2="537.4" stroke="#070752" stroke-width="1.3" />
<line x1="421.8" y1="518.3" x2="433.5" y2="518.3" stroke="#070752" stroke-width="1.1" />
<line x1="422.8" y1="526.1" x2="433.5" y2="526.1" stroke="#070752" stroke-width="1.1" />
<line x1="421.8" y1="534.8" x2="433.5" y2="534.8" stroke="#070752" stroke-width="1.1" />
<polygon points="422.2,526.1 426.40000000000003,524.0 426.40000000000003,528.2" fill="#070752"/>
<line x1="433.5" y1="526.1" x2="433.5" y2="534.8" stroke="#070752" stroke-width="1.1" />
<text x="435.4" y="520.28" font-family="Liberation Serif" font-size="6.6" fill="#070752" text-anchor="start" >MSiC2</text>
<text x="435.4" y="527.68" font-family="Liberation Serif" font-size="6.6" fill="#070752" text-anchor="start" textLength="41.2" lengthAdjust="spacingAndGlyphs" >C2M0080120D</text>
<text transform="translate(428.9,507.1) rotate(-90)" font-family="Liberation Serif" font-size="6.5" fill="#2a2a2a" text-anchor="middle" dy="2.15">2</text>
<text transform="translate(428.9,543.9) rotate(-90)" font-family="Liberation Serif" font-size="6.5" fill="#2a2a2a" text-anchor="middle" dy="2.15">3</text>
<line x1="433.5" y1="471.5" x2="433.5" y2="518.3" stroke="#070752" stroke-width="1.1" />
<line x1="433.5" y1="526.1" x2="433.5" y2="574.5" stroke="#070752" stroke-width="1.1" />
<circle cx="433.5" cy="552.5" r="1.25" fill="#070752"/>
<polygon points="381.3,537.5 385.5,534.4 400.2,534.4 402.4,537.5 400.2,540.6 385.5,540.6" fill="#fff07a" stroke="#b08a3a" stroke-width="0.7" stroke-linejoin="round"/>
<path d="M385.5,534.4 H400.2 M385.5,540.6 H400.2" stroke="#7a4a14" stroke-width="1.0" fill="none"/>
<text x="392.85" y="539.78" font-family="Liberation Serif" font-size="6.6" fill="#7a3a10" text-anchor="middle" >M2</text>
<polyline points="403.5,537.5 418.5,537.5" fill="none" stroke="#070752" stroke-width="1.0" stroke-linejoin="miter" stroke-linecap="square"/>
<text x="404" y="535.18" font-family="Liberation Serif" font-size="6.6" fill="#888" text-anchor="middle" >1</text>
<line x1="433.5" y1="574.5" x2="433.5" y2="582.5" stroke="#7c1414" stroke-width="1.0" />
<line x1="426.3" y1="582.5" x2="440.7" y2="582.5" stroke="#7c1414" stroke-width="1.1" />
<line x1="428.5" y1="585.5" x2="438.5" y2="585.5" stroke="#7c1414" stroke-width="1.0" />
<line x1="430.6" y1="587.5" x2="436.4" y2="587.5" stroke="#7c1414" stroke-width="1.0" />
<line x1="432.5" y1="589.5" x2="434.5" y2="589.5" stroke="#7c1414" stroke-width="1.0" />
<text x="433.5" y="595.68" font-family="Liberation Serif" font-size="6.6" fill="#8a2828" text-anchor="middle" >GND</text>
<text transform="translate(428.9,485.5) rotate(-90)" font-family="Liberation Serif" font-size="6.5" fill="#2a2a2a" text-anchor="middle" dy="2.15">2</text>
<rect x="418.5" y="419.5" width="29.54" height="51.7" fill="none" stroke="#070752" stroke-width="1.1"/>
<circle cx="433.5" cy="419.5" r="1.3" fill="#070752"/>
<polygon points="410.5,434.5 426.5,434.5 418.5,448.8" fill="#0000f0" stroke="#0000b0" stroke-width="0.8"/>
<line x1="411.1" y1="448.8" x2="425.9" y2="448.8" stroke="#070752" stroke-width="1.2" />
<polygon points="439.5,434.5 455.5,434.5 447.5,448.8" fill="#0000f0" stroke="#0000b0" stroke-width="0.8"/>
<line x1="440.1" y1="448.8" x2="454.9" y2="448.8" stroke="#070752" stroke-width="1.2" />
<text transform="translate(413,425.8) rotate(-90)" font-family="Liberation Serif" font-size="6.5" fill="#2a2a2a" text-anchor="middle" dy="2.15">3</text>
<text transform="translate(443,425.8) rotate(-90)" font-family="Liberation Serif" font-size="6.5" fill="#2a2a2a" text-anchor="middle" dy="2.15">1</text>
<text x="456.2" y="438.98" font-family="Liberation Serif" font-size="6.6" fill="#070752" text-anchor="start" >DSiC1</text>
<text x="456.2" y="446.48" font-family="Liberation Serif" font-size="6.6" fill="#070752" text-anchor="start" textLength="33.2" lengthAdjust="spacingAndGlyphs" >SCS220AE2</text>
<polyline points="433.5,412.5 514.5,412.5 514.5,456.5" fill="none" stroke="#070752" stroke-width="1.0" stroke-linejoin="miter" stroke-linecap="square"/>
<line x1="514.5" y1="456.5" x2="514.5" y2="478.5" stroke="#1a1a1a" stroke-width="1.0" />
<text transform="translate(510,462.5) rotate(-90)" font-family="Liberation Serif" font-size="6.5" fill="#2a2a2a" text-anchor="middle" dy="2.15">2</text>
<polyline points="499.5,478.5 529.5,478.5" fill="none" stroke="#070752" stroke-width="1.0" stroke-linejoin="miter" stroke-linecap="square"/>
<line x1="499.5" y1="478.5" x2="499.5" y2="552.5" stroke="#070752" stroke-width="1.1" />
<polygon points="491.9,515.5 507.1,515.5 499.5,500.8" fill="#0000f0" stroke="#0000b0" stroke-width="0.8"/>
<line x1="492.1" y1="500.8" x2="506.9" y2="500.8" stroke="#070752" stroke-width="1.2" />
<circle cx="499.5" cy="552.5" r="1.25" fill="#070752"/>
<line x1="529.5" y1="478.5" x2="529.5" y2="552.5" stroke="#070752" stroke-width="1.1" />
<polygon points="521.9,515.5 537.1,515.5 529.5,500.8" fill="#0000f0" stroke="#0000b0" stroke-width="0.8"/>
<line x1="522.1" y1="500.8" x2="536.9" y2="500.8" stroke="#070752" stroke-width="1.2" />
<circle cx="529.5" cy="552.5" r="1.25" fill="#070752"/>
<text transform="translate(495,522) rotate(-90)" font-family="Liberation Serif" font-size="6.5" fill="#2a2a2a" text-anchor="middle" dy="2.15">1</text>
<text transform="translate(525,522) rotate(-90)" font-family="Liberation Serif" font-size="6.5" fill="#2a2a2a" text-anchor="middle" dy="2.15">3</text>
<text x="537" y="475.98" font-family="Liberation Serif" font-size="6.6" fill="#070752" text-anchor="start" >DSiC2</text>
<text x="537" y="483.48" font-family="Liberation Serif" font-size="6.6" fill="#070752" text-anchor="start" textLength="33.2" lengthAdjust="spacingAndGlyphs" >SCS220AE2</text>
<path d="M41.5,604.5 H144.5 V722.5 H41.5 Z" fill="none" stroke="#000" stroke-width="1.1" stroke-dasharray="18 6" stroke-dashoffset="10.5"/>
<text x="40.75" y="601.2" font-family="Liberation Serif" font-size="9.4" fill="#070752" text-anchor="start" textLength="104.2" lengthAdjust="spacingAndGlyphs" >Capacitor convertidor Buck</text>
<line x1="85.5" y1="633.5" x2="85.5" y2="626.5" stroke="#7c1414" stroke-width="1.0" />
<line x1="81.5" y1="626.5" x2="89.5" y2="626.5" stroke="#7c1414" stroke-width="1.1" />
<text x="85.5" y="624.3" font-family="Liberation Serif" font-size="6.6" fill="#8a2828" text-anchor="middle" >Buck</text>
<line x1="85.5" y1="633.5" x2="85.5" y2="654.5" stroke="#070752" stroke-width="1.1" />
<line x1="85.5" y1="657.5" x2="85.5" y2="685.5" stroke="#070752" stroke-width="1.1" />
<line x1="78.3" y1="654.5" x2="92.7" y2="654.5" stroke="#070752" stroke-width="1.2" />
<path d="M78.3,658.7 Q85.5,656.1 92.7,658.7" fill="none" stroke="#070752" stroke-width="1.2"/>
<text transform="translate(81.1,646.8) rotate(-90)" font-family="Liberation Serif" font-size="6.5" fill="#2a2a2a" text-anchor="middle" dy="2.15">1</text>
<text transform="translate(81.1,664.8) rotate(-90)" font-family="Liberation Serif" font-size="6.5" fill="#2a2a2a" text-anchor="middle" dy="2.15">2</text>
<line x1="85.5" y1="685.5" x2="85.5" y2="692.5" stroke="#7c1414" stroke-width="1.0" />
<line x1="78.3" y1="692.5" x2="92.7" y2="692.5" stroke="#7c1414" stroke-width="1.1" />
<line x1="80.5" y1="695.5" x2="90.5" y2="695.5" stroke="#7c1414" stroke-width="1.0" />
<line x1="82.6" y1="697.5" x2="88.4" y2="697.5" stroke="#7c1414" stroke-width="1.0" />
<line x1="84.5" y1="699.5" x2="86.5" y2="699.5" stroke="#7c1414" stroke-width="1.0" />
<text x="85.5" y="705.68" font-family="Liberation Serif" font-size="6.6" fill="#8a2828" text-anchor="middle" >GND</text>
<text x="91.2" y="650.18" font-family="Liberation Serif" font-size="6.6" fill="#070752" text-anchor="start" >+C9</text>
<text x="94.5" y="657.98" font-family="Liberation Serif" font-size="6.6" fill="#070752" text-anchor="start" >1uF</text>
<path d="M174.5,604.5 H433.5 V722.5 H174.5 Z" fill="none" stroke="#000" stroke-width="1.1" stroke-dasharray="18 6" stroke-dashoffset="15.5"/>
<text x="225.75" y="601.2" font-family="Liberation Serif" font-size="9.4" fill="#070752" text-anchor="start" textLength="106" lengthAdjust="spacingAndGlyphs" >Capacitor convertidor Boost</text>
<line x1="196.5" y1="633.5" x2="196.5" y2="626.5" stroke="#7c1414" stroke-width="1.0" />
<line x1="192.5" y1="626.5" x2="200.5" y2="626.5" stroke="#7c1414" stroke-width="1.1" />
<text x="196.5" y="624.3" font-family="Liberation Serif" font-size="6.6" fill="#8a2828" text-anchor="middle" >Boost</text>
<line x1="196.5" y1="633.5" x2="196.5" y2="654.5" stroke="#070752" stroke-width="1.1" />
<line x1="196.5" y1="657.5" x2="196.5" y2="685.5" stroke="#070752" stroke-width="1.1" />
<line x1="189.3" y1="654.5" x2="203.7" y2="654.5" stroke="#070752" stroke-width="1.2" />
<path d="M189.3,658.7 Q196.5,656.1 203.7,658.7" fill="none" stroke="#070752" stroke-width="1.2"/>
<text transform="translate(192.1,646.8) rotate(-90)" font-family="Liberation Serif" font-size="6.5" fill="#2a2a2a" text-anchor="middle" dy="2.15">1</text>
<text transform="translate(192.1,664.8) rotate(-90)" font-family="Liberation Serif" font-size="6.5" fill="#2a2a2a" text-anchor="middle" dy="2.15">2</text>
<line x1="196.5" y1="685.5" x2="196.5" y2="692.5" stroke="#7c1414" stroke-width="1.0" />
<line x1="189.3" y1="692.5" x2="203.7" y2="692.5" stroke="#7c1414" stroke-width="1.1" />
<line x1="191.5" y1="695.5" x2="201.5" y2="695.5" stroke="#7c1414" stroke-width="1.0" />
<line x1="193.6" y1="697.5" x2="199.4" y2="697.5" stroke="#7c1414" stroke-width="1.0" />
<line x1="195.5" y1="699.5" x2="197.5" y2="699.5" stroke="#7c1414" stroke-width="1.0" />
<text x="196.5" y="705.68" font-family="Liberation Serif" font-size="6.6" fill="#8a2828" text-anchor="middle" >GND</text>
<text x="202.3" y="650.18" font-family="Liberation Serif" font-size="6.6" fill="#070752" text-anchor="start" >+C10</text>
<text x="206.5" y="657.98" font-family="Liberation Serif" font-size="6.6" fill="#070752" text-anchor="start" >1uF</text>
<line x1="270.5" y1="633.5" x2="270.5" y2="626.5" stroke="#7c1414" stroke-width="1.0" />
<line x1="266.5" y1="626.5" x2="274.5" y2="626.5" stroke="#7c1414" stroke-width="1.1" />
<text x="270.5" y="624.3" font-family="Liberation Serif" font-size="6.6" fill="#8a2828" text-anchor="middle" >Boost</text>
<line x1="270.5" y1="633.5" x2="270.5" y2="654.5" stroke="#070752" stroke-width="1.1" />
<line x1="270.5" y1="657.5" x2="270.5" y2="685.5" stroke="#070752" stroke-width="1.1" />
<line x1="263.3" y1="654.5" x2="277.7" y2="654.5" stroke="#070752" stroke-width="1.2" />
<path d="M263.3,658.7 Q270.5,656.1 277.7,658.7" fill="none" stroke="#070752" stroke-width="1.2"/>
<text transform="translate(266.1,646.8) rotate(-90)" font-family="Liberation Serif" font-size="6.5" fill="#2a2a2a" text-anchor="middle" dy="2.15">1</text>
<text transform="translate(266.1,664.8) rotate(-90)" font-family="Liberation Serif" font-size="6.5" fill="#2a2a2a" text-anchor="middle" dy="2.15">2</text>
<line x1="270.5" y1="685.5" x2="270.5" y2="692.5" stroke="#7c1414" stroke-width="1.0" />
<line x1="263.3" y1="692.5" x2="277.7" y2="692.5" stroke="#7c1414" stroke-width="1.1" />
<line x1="265.5" y1="695.5" x2="275.5" y2="695.5" stroke="#7c1414" stroke-width="1.0" />
<line x1="267.6" y1="697.5" x2="273.4" y2="697.5" stroke="#7c1414" stroke-width="1.0" />
<line x1="269.5" y1="699.5" x2="271.5" y2="699.5" stroke="#7c1414" stroke-width="1.0" />
<text x="270.5" y="705.68" font-family="Liberation Serif" font-size="6.6" fill="#8a2828" text-anchor="middle" >GND</text>
<text x="276.3" y="650.18" font-family="Liberation Serif" font-size="6.6" fill="#070752" text-anchor="start" >+C11</text>
<text x="280.5" y="657.98" font-family="Liberation Serif" font-size="6.6" fill="#070752" text-anchor="start" >1uF</text>
<line x1="344.5" y1="633.5" x2="344.5" y2="626.5" stroke="#7c1414" stroke-width="1.0" />
<line x1="340.5" y1="626.5" x2="348.5" y2="626.5" stroke="#7c1414" stroke-width="1.1" />
<text x="344.5" y="624.3" font-family="Liberation Serif" font-size="6.6" fill="#8a2828" text-anchor="middle" >Boost</text>
<line x1="344.5" y1="633.5" x2="344.5" y2="654.5" stroke="#070752" stroke-width="1.1" />
<line x1="344.5" y1="657.5" x2="344.5" y2="685.5" stroke="#070752" stroke-width="1.1" />
<line x1="337.3" y1="654.5" x2="351.7" y2="654.5" stroke="#070752" stroke-width="1.2" />
<path d="M337.3,658.7 Q344.5,656.1 351.7,658.7" fill="none" stroke="#070752" stroke-width="1.2"/>
<text transform="translate(340.1,646.8) rotate(-90)" font-family="Liberation Serif" font-size="6.5" fill="#2a2a2a" text-anchor="middle" dy="2.15">1</text>
<text transform="translate(340.1,664.8) rotate(-90)" font-family="Liberation Serif" font-size="6.5" fill="#2a2a2a" text-anchor="middle" dy="2.15">2</text>
<line x1="344.5" y1="685.5" x2="344.5" y2="692.5" stroke="#7c1414" stroke-width="1.0" />
<line x1="337.3" y1="692.5" x2="351.7" y2="692.5" stroke="#7c1414" stroke-width="1.1" />
<line x1="339.5" y1="695.5" x2="349.5" y2="695.5" stroke="#7c1414" stroke-width="1.0" />
<line x1="341.6" y1="697.5" x2="347.4" y2="697.5" stroke="#7c1414" stroke-width="1.0" />
<line x1="343.5" y1="699.5" x2="345.5" y2="699.5" stroke="#7c1414" stroke-width="1.0" />
<text x="344.5" y="705.68" font-family="Liberation Serif" font-size="6.6" fill="#8a2828" text-anchor="middle" >GND</text>
<text x="350.3" y="650.18" font-family="Liberation Serif" font-size="6.6" fill="#070752" text-anchor="start" >+C12</text>
<text x="354.5" y="657.98" font-family="Liberation Serif" font-size="6.6" fill="#070752" text-anchor="start" >1uF</text>
<line x1="403.5" y1="633.5" x2="403.5" y2="626.5" stroke="#7c1414" stroke-width="1.0" />
<line x1="399.5" y1="626.5" x2="407.5" y2="626.5" stroke="#7c1414" stroke-width="1.1" />
<text x="403.5" y="624.3" font-family="Liberation Serif" font-size="6.6" fill="#8a2828" text-anchor="middle" >Boost</text>
<line x1="403.5" y1="633.5" x2="403.5" y2="655.5" stroke="#070752" stroke-width="1.1" />
<line x1="403.5" y1="658.5" x2="403.5" y2="685.5" stroke="#070752" stroke-width="1.1" />
<line x1="396.3" y1="655.5" x2="410.7" y2="655.5" stroke="#070752" stroke-width="1.2" />
<line x1="396.3" y1="658.5" x2="410.7" y2="658.5" stroke="#070752" stroke-width="1.2" />
<text transform="translate(399.1,647.0) rotate(-90)" font-family="Liberation Serif" font-size="6.5" fill="#2a2a2a" text-anchor="middle" dy="2.15">1</text>
<text transform="translate(399.1,665.0) rotate(-90)" font-family="Liberation Serif" font-size="6.5" fill="#2a2a2a" text-anchor="middle" dy="2.15">2</text>
<line x1="403.5" y1="685.5" x2="403.5" y2="692.5" stroke="#7c1414" stroke-width="1.0" />
<line x1="396.3" y1="692.5" x2="410.7" y2="692.5" stroke="#7c1414" stroke-width="1.1" />
<line x1="398.5" y1="695.5" x2="408.5" y2="695.5" stroke="#7c1414" stroke-width="1.0" />
<line x1="400.6" y1="697.5" x2="406.4" y2="697.5" stroke="#7c1414" stroke-width="1.0" />
<line x1="402.5" y1="699.5" x2="404.5" y2="699.5" stroke="#7c1414" stroke-width="1.0" />
<text x="403.5" y="705.68" font-family="Liberation Serif" font-size="6.6" fill="#8a2828" text-anchor="middle" >GND</text>
<text x="410.6" y="658.48" font-family="Liberation Serif" font-size="6.6" fill="#070752" text-anchor="start" >C13</text>
<text x="410.6" y="665.98" font-family="Liberation Serif" font-size="6.6" fill="#070752" text-anchor="start" >470nF</text>
<path d="M499.5,559.5 H817.5 V685.5 H499.5 Z" fill="none" stroke="#000" stroke-width="1.1" stroke-dasharray="18 6" stroke-dashoffset="3"/>
<text x="632.5" y="556.8" font-family="Liberation Serif" font-size="9.4" fill="#070752" text-anchor="start" textLength="71.25" lengthAdjust="spacingAndGlyphs" >Sensor de corriente</text>
<rect x="580.5" y="582.5" width="58.0" height="87.0" fill="#ffffa8" stroke="#6e2c00" stroke-width="1.15"/>
<text x="580.5" y="579.78" font-family="Liberation Serif" font-size="6.6" fill="#222" text-anchor="start" >LT1</text>
<text x="609.6" y="624.18" font-family="Liberation Serif" font-size="6.6" fill="#222" text-anchor="middle" >LTS25-NP</text>
<text x="580.5" y="675.98" font-family="Liberation Serif" font-size="6.6" fill="#070752" text-anchor="start" >LTS25-NP</text>
<line x1="566.5" y1="589.5" x2="580.5" y2="589.5" stroke="#1a1a1a" stroke-width="1.0" />
<text x="573" y="588.08" font-family="Liberation Serif" font-size="6.6" fill="#444" text-anchor="middle" >1</text>
<line x1="566.5" y1="604.5" x2="580.5" y2="604.5" stroke="#1a1a1a" stroke-width="1.0" />
<text x="573" y="603.08" font-family="Liberation Serif" font-size="6.6" fill="#444" text-anchor="middle" >2</text>
<line x1="566.5" y1="618.5" x2="580.5" y2="618.5" stroke="#1a1a1a" stroke-width="1.0" />
<text x="573" y="617.08" font-family="Liberation Serif" font-size="6.6" fill="#444" text-anchor="middle" >3</text>
<line x1="566.5" y1="633.5" x2="580.5" y2="633.5" stroke="#1a1a1a" stroke-width="1.0" />
<text x="573" y="632.08" font-family="Liberation Serif" font-size="6.6" fill="#444" text-anchor="middle" >4</text>
<line x1="566.5" y1="648.5" x2="580.5" y2="648.5" stroke="#1a1a1a" stroke-width="1.0" />
<text x="573" y="647.08" font-family="Liberation Serif" font-size="6.6" fill="#444" text-anchor="middle" >5</text>
<line x1="566.5" y1="663.5" x2="580.5" y2="663.5" stroke="#1a1a1a" stroke-width="1.0" />
<text x="573" y="662.08" font-family="Liberation Serif" font-size="6.6" fill="#444" text-anchor="middle" >6</text>
<line x1="639.5" y1="589.5" x2="654.5" y2="589.5" stroke="#1a1a1a" stroke-width="1.0" />
<line x1="639.5" y1="604.5" x2="654.5" y2="604.5" stroke="#1a1a1a" stroke-width="1.0" />
<line x1="639.5" y1="618.5" x2="654.5" y2="618.5" stroke="#1a1a1a" stroke-width="1.0" />
<text x="645.2" y="587.58" font-family="Liberation Serif" font-size="6.6" fill="#444" text-anchor="start" >+</text>
<text x="645" y="602.38" font-family="Liberation Serif" font-size="6.6" fill="#444" text-anchor="start" >0V</text>
<text x="645" y="616.58" font-family="Liberation Serif" font-size="6.6" fill="#444" text-anchor="start" >OUT</text>
<polygon points="529.3,589.5 533.5,586.4 548.2,586.4 550.4,589.5 548.2,592.6 533.5,592.6" fill="#fff07a" stroke="#b08a3a" stroke-width="0.7" stroke-linejoin="round"/>
<path d="M533.5,586.4 H548.2 M533.5,592.6 H548.2" stroke="#7a4a14" stroke-width="1.0" fill="none"/>
<text x="540.85" y="591.78" font-family="Liberation Serif" font-size="6.6" fill="#7a3a10" text-anchor="middle" >I2</text>
<polyline points="551.5,589.5 566.5,589.5" fill="none" stroke="#070752" stroke-width="1.0" stroke-linejoin="miter" stroke-linecap="square"/>
<polygon points="529.3,633.5 533.5,630.4 548.2,630.4 550.4,633.5 548.2,636.6 533.5,636.6" fill="#fff07a" stroke="#b08a3a" stroke-width="0.7" stroke-linejoin="round"/>
<path d="M533.5,630.4 H548.2 M533.5,636.6 H548.2" stroke="#7a4a14" stroke-width="1.0" fill="none"/>
<text x="540.85" y="635.78" font-family="Liberation Serif" font-size="6.6" fill="#7a3a10" text-anchor="middle" >I1</text>
<polyline points="551.5,633.5 566.5,633.5" fill="none" stroke="#070752" stroke-width="1.0" stroke-linejoin="miter" stroke-linecap="square"/>
<polyline points="566.5,604.5 514.5,604.5 514.5,663.5 566.5,663.5" fill="none" stroke="#070752" stroke-width="1.0" stroke-linejoin="miter" stroke-linecap="square"/>
<polyline points="566.5,618.5 521.5,618.5 521.5,648.5 566.5,648.5" fill="none" stroke="#070752" stroke-width="1.0" stroke-linejoin="miter" stroke-linecap="square"/>
<polyline points="654.5,589.5 728.5,589.5 728.5,582.5" fill="none" stroke="#070752" stroke-width="1.0" stroke-linejoin="miter" stroke-linecap="square"/>
<line x1="728.5" y1="582.5" x2="728.5" y2="574.5" stroke="#7c1414" stroke-width="1.0" />
<line x1="724.5" y1="574.5" x2="732.5" y2="574.5" stroke="#7c1414" stroke-width="1.1" />
<text x="728.5" y="572.3" font-family="Liberation Serif" font-size="6.6" fill="#8a2828" text-anchor="middle" >5V</text>
<polyline points="654.5,604.5 728.5,604.5 728.5,611.5" fill="none" stroke="#070752" stroke-width="1.0" stroke-linejoin="miter" stroke-linecap="square"/>
<line x1="728.5" y1="611.5" x2="728.5" y2="618.5" stroke="#7c1414" stroke-width="1.0" />
<line x1="721.3" y1="618.5" x2="735.7" y2="618.5" stroke="#7c1414" stroke-width="1.1" />
<line x1="723.5" y1="621.5" x2="733.5" y2="621.5" stroke="#7c1414" stroke-width="1.0" />
<line x1="725.6" y1="623.5" x2="731.4" y2="623.5" stroke="#7c1414" stroke-width="1.0" />
<line x1="727.5" y1="625.5" x2="729.5" y2="625.5" stroke="#7c1414" stroke-width="1.0" />
<text x="728.5" y="631.68" font-family="Liberation Serif" font-size="6.6" fill="#8a2828" text-anchor="middle" >GND_T</text>
<polyline points="654.5,618.5 676.5,618.5" fill="none" stroke="#070752" stroke-width="1.0" stroke-linejoin="miter" stroke-linecap="square"/>
<circle cx="669.5" cy="618.5" r="1.25" fill="#070752"/>
<polygon points="677.2,618.5 679.6,615.4 703.0,615.4 706.8,618.5 703.0,621.6 679.6,621.6" fill="#fff07a" stroke="#b08a3a" stroke-width="0.7" stroke-linejoin="round"/>
<path d="M679.6,615.4 H703.0 M679.6,621.6 H703.0" stroke="#7a4a14" stroke-width="1.0" fill="none"/>
<text x="691.3" y="620.78" font-family="Liberation Serif" font-size="6.6" fill="#7a3a10" text-anchor="middle" >Out_C</text>
<line x1="669.5" y1="618.5" x2="669.5" y2="639.5" stroke="#070752" stroke-width="1.1" />
<line x1="669.5" y1="642.5" x2="669.5" y2="663.5" stroke="#070752" stroke-width="1.1" />
<line x1="662.3" y1="639.5" x2="676.7" y2="639.5" stroke="#070752" stroke-width="1.2" />
<path d="M662.3,643.7 Q669.5,641.1 676.7,643.7" fill="none" stroke="#070752" stroke-width="1.2"/>
<text transform="translate(665.1,631.8) rotate(-90)" font-family="Liberation Serif" font-size="6.5" fill="#2a2a2a" text-anchor="middle" dy="2.15">1</text>
<text transform="translate(665.1,649.8) rotate(-90)" font-family="Liberation Serif" font-size="6.5" fill="#2a2a2a" text-anchor="middle" dy="2.15">2</text>
<line x1="669.5" y1="663.5" x2="669.5" y2="670.5" stroke="#7c1414" stroke-width="1.0" />
<line x1="662.3" y1="670.5" x2="676.7" y2="670.5" stroke="#7c1414" stroke-width="1.1" />
<line x1="664.5" y1="673.5" x2="674.5" y2="673.5" stroke="#7c1414" stroke-width="1.0" />
<line x1="666.6" y1="675.5" x2="672.4" y2="675.5" stroke="#7c1414" stroke-width="1.0" />
<line x1="668.5" y1="677.5" x2="670.5" y2="677.5" stroke="#7c1414" stroke-width="1.0" />
<text x="669.5" y="683.68" font-family="Liberation Serif" font-size="6.6" fill="#8a2828" text-anchor="middle" >GND_T</text>
<text x="675" y="635.48" font-family="Liberation Serif" font-size="6.6" fill="#070752" text-anchor="start" >+C8</text>
<text x="678.7" y="642.98" font-family="Liberation Serif" font-size="6.6" fill="#070752" text-anchor="start" >10uF</text>
<line x1="787.5" y1="582.5" x2="787.5" y2="574.5" stroke="#7c1414" stroke-width="1.0" />
<line x1="783.5" y1="574.5" x2="791.5" y2="574.5" stroke="#7c1414" stroke-width="1.1" />
<text x="787.5" y="572.3" font-family="Liberation Serif" font-size="6.6" fill="#8a2828" text-anchor="middle" >5V</text>
<line x1="787.5" y1="582.5" x2="787.5" y2="609.5" stroke="#070752" stroke-width="1.1" />
<line x1="787.5" y1="612.5" x2="787.5" y2="648.5" stroke="#070752" stroke-width="1.1" />
<line x1="780.3" y1="609.5" x2="794.7" y2="609.5" stroke="#070752" stroke-width="1.2" />
<line x1="780.3" y1="612.5" x2="794.7" y2="612.5" stroke="#070752" stroke-width="1.2" />
<text transform="translate(783.1,601.9) rotate(-90)" font-family="Liberation Serif" font-size="6.5" fill="#2a2a2a" text-anchor="middle" dy="2.15">1</text>
<text transform="translate(783.1,619.9) rotate(-90)" font-family="Liberation Serif" font-size="6.5" fill="#2a2a2a" text-anchor="middle" dy="2.15">2</text>
<line x1="787.5" y1="648.5" x2="787.5" y2="655.5" stroke="#7c1414" stroke-width="1.0" />
<line x1="780.3" y1="655.5" x2="794.7" y2="655.5" stroke="#7c1414" stroke-width="1.1" />
<line x1="782.5" y1="658.5" x2="792.5" y2="658.5" stroke="#7c1414" stroke-width="1.0" />
<line x1="784.6" y1="660.5" x2="790.4" y2="660.5" stroke="#7c1414" stroke-width="1.0" />
<line x1="786.5" y1="662.5" x2="788.5" y2="662.5" stroke="#7c1414" stroke-width="1.0" />
<text x="787.5" y="668.68" font-family="Liberation Serif" font-size="6.6" fill="#8a2828" text-anchor="middle" >GND_T</text>
<text x="795.8" y="614.68" font-family="Liberation Serif" font-size="6.6" fill="#070752" text-anchor="start" >C7</text>
<text x="795.8" y="622.18" font-family="Liberation Serif" font-size="6.6" fill="#070752" text-anchor="start" >100nF</text>
<line x1="499.5" y1="700.5" x2="839.5" y2="700.5" stroke="#000" stroke-width="1.1" />
<line x1="499.5" y1="700.5" x2="499.5" y2="744.5" stroke="#000" stroke-width="1.1" />
<line x1="499.5" y1="714.5" x2="684.5" y2="714.5" stroke="#000" stroke-width="1.1" />
<line x1="499.5" y1="729.5" x2="684.5" y2="729.5" stroke="#000" stroke-width="1.1" />
<line x1="499.5" y1="737.5" x2="839.5" y2="737.5" stroke="#000" stroke-width="1.1" />
<line x1="551.5" y1="714.5" x2="551.5" y2="729.5" stroke="#000" stroke-width="1.1" />
<line x1="617.5" y1="714.5" x2="617.5" y2="737.5" stroke="#000" stroke-width="1.1" />
<line x1="684.5" y1="700.5" x2="684.5" y2="737.5" stroke="#000" stroke-width="1.1" />
<line x1="765.5" y1="700.5" x2="765.5" y2="737.5" stroke="#000" stroke-width="1.1" />
<text x="503.3" y="709.18" font-family="Liberation Serif" font-size="6.6" fill="#222" text-anchor="start" >Title</text>
<text x="520.4" y="709.7" font-family="Liberation Serif" font-size="9.4" fill="#7e7e7e" text-anchor="start" textLength="20.4" lengthAdjust="spacingAndGlyphs" font-style="italic">=title</text>
<text x="503.3" y="724.18" font-family="Liberation Serif" font-size="6.6" fill="#222" text-anchor="start" >Size:</text>
<text x="521.7" y="724.9" font-family="Liberation Serif" font-size="9.4" fill="#000080" text-anchor="start" textLength="9.3" lengthAdjust="spacingAndGlyphs" >A4</text>
<text x="554.8" y="724.18" font-family="Liberation Serif" font-size="6.6" fill="#222" text-anchor="start" >Number:</text>
<g clip-path="url(#cn)">
<text x="577.3" y="724.9" font-family="Liberation Serif" font-size="9.4" fill="#7e7e7e" text-anchor="start" >=documentnumber</text>
</g>
<text x="621" y="724.18" font-family="Liberation Serif" font-size="6.6" fill="#222" text-anchor="start" >Revision:</text>
<text x="646" y="724.9" font-family="Liberation Serif" font-size="9.4" fill="#7e7e7e" text-anchor="start" textLength="30.2" lengthAdjust="spacingAndGlyphs" >=revision</text>
<text x="503.3" y="735.18" font-family="Liberation Serif" font-size="6.6" fill="#222" text-anchor="start" >Date:</text>
<text x="521.7" y="735.18" font-family="Liberation Serif" font-size="6.6" fill="#070752" text-anchor="start" textLength="29.5" lengthAdjust="spacingAndGlyphs" >01/04/2025</text>
<text x="566.2" y="735.18" font-family="Liberation Serif" font-size="6.6" fill="#222" text-anchor="start" >Time:</text>
<text x="584.2" y="735.18" font-family="Liberation Serif" font-size="6.6" fill="#070752" text-anchor="start" textLength="33" lengthAdjust="spacingAndGlyphs" >09:11:24 p. m.</text>
<text x="621.5" y="735.18" font-family="Liberation Serif" font-size="6.6" fill="#222" text-anchor="start" >Sheet</text>
<text x="637" y="735.18" font-family="Liberation Serif" font-size="6.6" fill="#7e7e7e" text-anchor="start" >=sheetnumber</text>
<text x="651" y="735.18" font-family="Liberation Serif" font-size="6.6" fill="#222" text-anchor="start" >of</text>
<text x="657" y="735.18" font-family="Liberation Serif" font-size="6.6" fill="#7e7e7e" text-anchor="start" >=sheettotal</text>
<text x="503.3" y="742.48" font-family="Liberation Serif" font-size="6.6" fill="#222" text-anchor="start" >File:</text>
<text x="521.7" y="742.48" font-family="Liberation Serif" font-size="6.6" fill="#070752" text-anchor="start" textLength="248" lengthAdjust="spacingAndGlyphs" >F:\Escritorio\Maestria\Tesis\Diseño del convertidor bidireccional V2\Convetidor_v2.SchDoc</text>
<text x="687.2" y="706.21" font-family="Liberation Serif" font-size="7.0" fill="#1c1c80" text-anchor="start" textLength="40.3" lengthAdjust="spacingAndGlyphs" font-style="italic">Altium Limited</text>
<text x="687.2" y="713.56" font-family="Liberation Serif" font-size="7.0" fill="#1c1c80" text-anchor="start" textLength="64.8" lengthAdjust="spacingAndGlyphs" font-style="italic">L3, 12a Rodborough Rd</text>
<text x="687.2" y="720.91" font-family="Liberation Serif" font-size="7.0" fill="#1c1c80" text-anchor="start" textLength="40.6" lengthAdjust="spacingAndGlyphs" font-style="italic">Frenchs Forest</text>
<text x="687.2" y="728.26" font-family="Liberation Serif" font-size="7.0" fill="#1c1c80" text-anchor="start" textLength="13" lengthAdjust="spacingAndGlyphs" font-style="italic">NSW</text>
<text x="687.2" y="735.61" font-family="Liberation Serif" font-size="7.0" fill="#1c1c80" text-anchor="start" textLength="39.1" lengthAdjust="spacingAndGlyphs" font-style="italic">Australia 2086</text>
<path d="M773.2,702.8 H835 V728.7 Q835,732.7 831,732.7 H769.2 V706.8 Q769.2,702.8 773.2,702.8 Z" fill="#000"/>
<text x="772" y="725" font-family="Liberation Sans" font-size="19.6" font-weight="bold" font-style="italic" fill="#fff" stroke="#fff" stroke-width="0.7" textLength="58.6" lengthAdjust="spacingAndGlyphs">Altıum</text>
<rect x="831.6" y="722.6" width="1" height="1" fill="#ddd"/>
</g>
</svg>
<!-- toolbar -->
<div id="tb" class="abs"></div>

<svg class="abs" style="left:0;top:0" width="960" height="100" viewBox="0 0 960 100">
<defs>
 <linearGradient id="fn1" x1="0" y1="0" x2="0" y2="1"><stop offset="0" stop-color="#6fb1d9"/><stop offset="0.35" stop-color="#a9d6ea"/><stop offset="1" stop-color="#d5edf5"/></linearGradient>
 <linearGradient id="chipg" x1="0" y1="0" x2="1" y2="0"><stop offset="0" stop-color="#fbe6a8"/><stop offset="0.5" stop-color="#f7d36c"/><stop offset="1" stop-color="#f1c558"/></linearGradient>
 <linearGradient id="busg" x1="0" y1="0" x2="1" y2="0"><stop offset="0" stop-color="#e3edfb"/><stop offset="1" stop-color="#b4ccf0"/></linearGradient>
 <linearGradient id="grn" x1="0" y1="0" x2="0" y2="1"><stop offset="0" stop-color="#63d08f"/><stop offset="1" stop-color="#38b06a"/></linearGradient>
 <linearGradient id="d1g" x1="0" y1="0" x2="0" y2="1"><stop offset="0" stop-color="#fbe79a"/><stop offset="1" stop-color="#ebc750"/></linearGradient>
</defs>
<!-- funnel -->
<path d="M141.3,56.2 H167.5 L159.2,66.8 V76 Q159.2,78 157.2,78 H151.6 Q149.6,78 149.6,76 V66.8 Z" fill="url(#fn1)" stroke="#7fb9d8" stroke-width="0.8"/>
<path d="M141.3,56.2 H167.5 L165.4,59 H143.5 Z" fill="#78b6dc"/>
<rect x="151.4" y="66" width="6" height="11" fill="#d9eff7"/>
<!-- move cross -->
<g stroke="#7c96da" stroke-width="1.6" fill="#7c96da">
 <line x1="204.1" y1="56" x2="204.1" y2="78.4"/><line x1="193" y1="67.2" x2="215.2" y2="67.2"/>
 <polygon points="204.1,54.2 207,58.6 201.2,58.6" stroke="none"/><polygon points="204.1,80.2 207,75.8 201.2,75.8" stroke="none"/>
 <polygon points="190.8,67.2 195.2,64.3 195.2,70.1" stroke="none"/><polygon points="217.4,67.2 213,64.3 213,70.1" stroke="none"/>
</g>
<polygon points="227.10000000000002,82.4 227.10000000000002,90.2 219.3,90.2" fill="#c6c6c6"/>
<!-- selection -->
<rect x="242.3" y="55.3" width="25.6" height="25.2" fill="none" stroke="#7c96da" stroke-width="1.9" stroke-dasharray="3.9 2.3"/>
<polygon points="277.2,82.4 277.2,90.2 269.4,90.2" fill="#c6c6c6"/>
<!-- align (disabled) -->
<rect x="293.3" y="55.7" width="3.5" height="24.4" fill="#5e5e5e"/>
<rect x="299.1" y="56.2" width="11.9" height="5.7" fill="#6b6b6b"/><rect x="300.6" y="57.7" width="8.9" height="2.7" fill="#7d7d7d"/>
<rect x="299.1" y="64.2" width="17.7" height="7.4" fill="#6b6b6b"/><rect x="300.6" y="65.7" width="14.7" height="4.4" fill="#7d7d7d"/>
<line x1="302" y1="76.6" x2="312.8" y2="76.6" stroke="#6b6b6b" stroke-width="1.6"/><polygon points="300,76.6 304.6,73.6 304.6,79.6" fill="#6b6b6b"/>
<polygon points="326.90000000000003,82.4 326.90000000000003,90.2 319.1,90.2" fill="#c6c6c6"/>
<line x1="331.4" y1="52" x2="331.4" y2="83" stroke="#1f1f1f" stroke-width="1.3"/>
<!-- chip -->
<g stroke="#a58a34" stroke-width="1.9"><line x1="342.9" y1="58.9" x2="370.8" y2="58.9"/><line x1="342.9" y1="64.9" x2="370.8" y2="64.9"/><line x1="342.9" y1="70.8" x2="370.8" y2="70.8"/><line x1="342.9" y1="77" x2="370.8" y2="77"/></g>
<rect x="349.4" y="54" width="15.2" height="27.4" fill="#b89a3c"/>
<rect x="351" y="55.6" width="12" height="24.2" fill="url(#chipg)"/>
<!-- wire -->
<g fill="#5a9bd8">
<path d="M391.2,58.4 H404.5 L411.5,64.5 H422.5 L419.6,67.8 H409.5 L402.5,61.7 H394.1 Z"/>
<path d="M391.2,68.2 H404.5 L411.5,74.3 H422.5 L419.6,77.6 H409.5 L402.5,71.5 H394.1 Z"/>
</g>
<polygon points="429.0,82.4 429.0,90.2 421.2,90.2" fill="#c6c6c6"/>
<!-- gnd -->
<g stroke="#e15b4c" stroke-width="2"><line x1="456" y1="54" x2="456" y2="69"/><line x1="441" y1="69" x2="471" y2="69"/><line x1="445" y1="73" x2="467.2" y2="73"/><line x1="449.1" y1="77" x2="463.1" y2="77"/><line x1="453" y1="80.9" x2="458.9" y2="80.9"/></g>
<polygon points="479.0,82.4 479.0,90.2 471.2,90.2" fill="#c6c6c6"/>
<!-- bus entry -->
<path d="M492.9,53.6 H496.5 Q500.8,54.5 500.8,60 V82.6 H492.9 Z" fill="url(#busg)"/>
<g stroke="#5a7be0" stroke-width="1.6"><line x1="500.8" y1="69.9" x2="520" y2="69.9"/><line x1="508.8" y1="66.2" x2="506.4" y2="73.6"/><line x1="513.8" y1="66.2" x2="511.4" y2="73.6"/><line x1="518.8" y1="66.2" x2="516.4" y2="73.6"/></g>
<polygon points="529.0999999999999,82.4 529.0999999999999,90.2 521.3,90.2" fill="#c6c6c6"/>
<!-- sheet symbol -->
<g stroke="#6f97dc" stroke-width="1.3"><line x1="541.2" y1="64.6" x2="573.1" y2="64.6"/><line x1="541.2" y1="72.5" x2="573.1" y2="72.5"/></g>
<rect x="545.5" y="58.4" width="23.2" height="20.3" fill="url(#grn)" stroke="#5b90d2" stroke-width="1"/>
<g fill="#f2e85a"><polygon points="546.2,61.2 551.6,64.6 546.2,68"/><polygon points="546.2,69.1 551.6,72.5 546.2,75.9"/><polygon points="568,61.2 562.6,64.6 568,68"/><polygon points="568,69.1 562.6,72.5 568,75.9"/></g>
<polygon points="579.0,82.4 579.0,90.2 571.2,90.2" fill="#c6c6c6"/>
<!-- D1 -->
<line x1="616" y1="67.5" x2="622.4" y2="67.5" stroke="#e3c352" stroke-width="1.4"/>
<path d="M591,59.1 H612.6 L617.8,67.5 L612.6,75.8 H591 Z" fill="url(#d1g)" stroke="#d1b040" stroke-width="0.8"/>
<text x="602.2" y="72.4" font-family="Liberation Sans" font-size="13" font-weight="bold" fill="#8a7624" text-anchor="middle" textLength="17.5" lengthAdjust="spacingAndGlyphs">D1</text>
<polygon points="629.0,82.4 629.0,90.2 621.2,90.2" fill="#c6c6c6"/>
<!-- info -->
<line x1="641.4" y1="67.3" x2="647" y2="67.3" stroke="#e0604f" stroke-width="1.7"/>
<circle cx="659.7" cy="67.3" r="12.3" fill="none" stroke="#e0604f" stroke-width="1.8"/>
<circle cx="659.7" cy="60.4" r="1.6" fill="#e0604f"/>
<path d="M657.3,64.2 H660.9 V73 H662.4 V74.3 H657 V73 H658.6 V65.5 H657.3 Z" fill="#e0604f"/>
<polygon points="679.0,82.4 679.0,90.2 671.2,90.2" fill="#c6c6c6"/>
<!-- A -->
<text x="707.2" y="81.5" font-family="Liberation Serif" font-size="39" font-weight="bold" fill="#5b9bd5" text-anchor="middle" textLength="27.5" lengthAdjust="spacingAndGlyphs">A</text>
<polygon points="728.6999999999999,82.4 728.6999999999999,90.2 720.9,90.2" fill="#c6c6c6"/>
<!-- arc -->
<path d="M742.9,76.2 A13.9,13.9 0 1 1 770.2,76.8" fill="none" stroke="#5b9bd5" stroke-width="1.8"/>
<polygon points="779.0999999999999,82.4 779.0999999999999,90.2 771.3,90.2" fill="#c6c6c6"/>
</svg>

<!-- scrollbars & right panel -->

<!-- vertical scrollbar -->
<div class="abs" style="left:869px;top:39.5px;width:33px;height:797px;background:#404040"></div>
<div class="abs" style="left:0;top:803px;width:902px;height:33px;background:#404040"></div>
<div class="abs" style="left:0;top:803px;width:11px;height:33px;background:#4a4a4a"></div>
<div class="abs" style="left:902px;top:0;width:5.5px;height:836px;background:#363636"></div>
<div class="abs" style="left:907.5px;top:0;width:36px;height:836px;background:#3e3e3e"></div>
<div class="abs" style="left:943.5px;top:0;width:5.5px;height:836px;background:#363636"></div>
<div class="abs" style="left:949px;top:0;width:11px;height:836px;background:#4b4b4b"></div>
<svg class="abs" style="left:0;top:0" width="960" height="836" viewBox="0 0 960 836">
 <polygon points="877,60.6 893,60.6 885,51.8" fill="#808080"/>
 <rect x="877" y="71.2" width="16" height="700" rx="8" fill="#808080"/>
 <polygon points="877,782.8 893,782.8 885,791" fill="#808080"/>
 <polygon points="32,811.3 32,826.8 22.8,819" fill="#808080"/>
 <rect x="85" y="811.3" width="728.8" height="15.5" rx="7.7" fill="#808080"/>
 <polygon points="848.4,811.3 848.4,826.8 857.3,819" fill="#808080"/>
 <!-- side tabs -->
 <rect x="910.6" y="4.6" width="29.6" height="71.2" rx="5" fill="#505050" stroke="#1e1e1e" stroke-width="1.4"/>
 <rect x="910.6" y="80.4" width="29.6" height="84.8" rx="5" fill="#505050" stroke="#1e1e1e" stroke-width="1.4"/>
 <text transform="translate(918.4,10.2) rotate(90)" font-family="Liberation Sans" font-size="18.5" fill="#f2f2f2" textLength="61.5" lengthAdjust="spacingAndGlyphs">Libraries</text>
 <text transform="translate(918.4,85.8) rotate(90)" font-family="Liberation Sans" font-size="18.5" fill="#f2f2f2" textLength="74.8" lengthAdjust="spacingAndGlyphs">Properties</text>
</svg>

</body></html>
